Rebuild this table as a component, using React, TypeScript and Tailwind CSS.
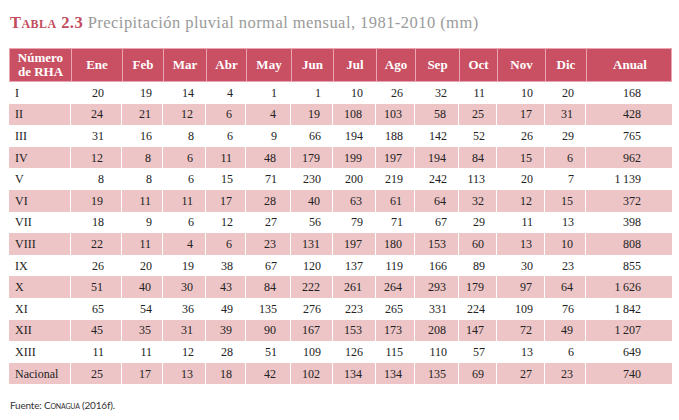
const MONTHS = [
  { label: "Ene", pad: "pr-[18px]" },
  { label: "Feb", pad: "pr-[11px]" },
  { label: "Mar", pad: "pr-[12px]" },
  { label: "Abr", pad: "pr-[13px]" },
  { label: "May", pad: "pr-[14px]" },
  { label: "Jun", pad: "pr-[12px]" },
  { label: "Jul", pad: "pr-[13px]" },
  { label: "Ago", pad: "pr-[12px]" },
  { label: "Sep", pad: "pr-[12px]" },
  { label: "Oct", pad: "pr-[12px]" },
  { label: "Nov", pad: "pr-[12px]" },
  { label: "Dic", pad: "pr-[12px]" },
  { label: "Anual", pad: "pr-[31px]" },
];

const ROWS: [string, string[]][] = [
  ["I", ["20", "19", "14", "4", "1", "1", "10", "26", "32", "11", "10", "20", "168"]],
  ["II", ["24", "21", "12", "6", "4", "19", "108", "103", "58", "25", "17", "31", "428"]],
  ["III", ["31", "16", "8", "6", "9", "66", "194", "188", "142", "52", "26", "29", "765"]],
  ["IV", ["12", "8", "6", "11", "48", "179", "199", "197", "194", "84", "15", "6", "962"]],
  ["V", ["8", "8", "6", "15", "71", "230", "200", "219", "242", "113", "20", "7", "1\u2009139"]],
  ["VI", ["19", "11", "11", "17", "28", "40", "63", "61", "64", "32", "12", "15", "372"]],
  ["VII", ["18", "9", "6", "12", "27", "56", "79", "71", "67", "29", "11", "13", "398"]],
  ["VIII", ["22", "11", "4", "6", "23", "131", "197", "180", "153", "60", "13", "10", "808"]],
  ["IX", ["26", "20", "19", "38", "67", "120", "137", "119", "166", "89", "30", "23", "855"]],
  ["X", ["51", "40", "30", "43", "84", "222", "261", "264", "293", "179", "97", "64", "1\u2009626"]],
  ["XI", ["65", "54", "36", "49", "135", "276", "223", "265", "331", "224", "109", "76", "1\u2009842"]],
  ["XII", ["45", "35", "31", "39", "90", "167", "153", "173", "208", "147", "72", "49", "1\u2009207"]],
  ["XIII", ["11", "11", "12", "28", "51", "109", "126", "115", "110", "57", "13", "6", "649"]],
  ["Nacional", ["25", "17", "13", "18", "42", "102", "134", "134", "135", "69", "27", "23", "740"]],
];

const GRID =
  "grid grid-cols-[62px_51px_41px_43px_40px_45px_42px_43px_39px_44px_38px_48px_41px_86px]";

export default function App() {
  return (
    <div className="w-[679px] h-[420px] bg-white overflow-hidden font-['Liberation_Serif',serif]">
      {/* Title */}
      <div className="pl-[10px] pt-[13px] text-[16.5px] leading-[19px] tracking-[0.45px] whitespace-nowrap">
        <span className="font-bold text-[#c24a5d] [font-variant:small-caps]">Tabla 2.3</span>{" "}
        <span className="text-[#9a9a9a]">Precipitación pluvial normal mensual, 1981-2010 (mm)</span>
      </div>

      {/* Table */}
      <div className="ml-[9px] mt-[16px] w-[663px]">
        <div className={`${GRID} h-[34px] bg-[#c94f63] border border-[#e9a6b0] text-white font-bold text-[13px] leading-[14px]`}>
          <div className="flex items-center justify-center text-center border-r border-[#e9a6b0]">
            Número<br />de RHA
          </div>
          {MONTHS.map((m, i) => (
            <div
              key={m.label}
              className={`flex items-center justify-center ${i < MONTHS.length - 1 ? "border-r border-[#e9a6b0]" : ""}`}
            >
              {m.label}
            </div>
          ))}
        </div>

        {ROWS.map(([name, vals], r) => {
          const shaded = r % 2 === 1;
          return (
            <div
              key={name}
              className={`${GRID} h-[21.6px] text-[12px] text-[#222] ${shaded ? "bg-[#eec5c6]" : "bg-white"}`}
            >
              <div className={`flex items-center pl-[6px] ${shaded ? "border-r border-white" : ""}`}>{name}</div>
              {vals.map((v, i) => (
                <div
                  key={i}
                  className={`flex items-center justify-end ${MONTHS[i].pad} ${
                    shaded && i < vals.length - 1 ? "border-r border-white" : ""
                  }`}
                >
                  {v}
                </div>
              ))}
            </div>
          );
        })}
      </div>

      {/* Source */}
      <div className="pl-[10px] mt-[14px] text-[10px] tracking-[-0.2px] text-[#333] font-['Lato',sans-serif]">
        Fuente: <span className="[font-variant:small-caps]">Conagua</span> (2016f).
      </div>
    </div>
  );
}
